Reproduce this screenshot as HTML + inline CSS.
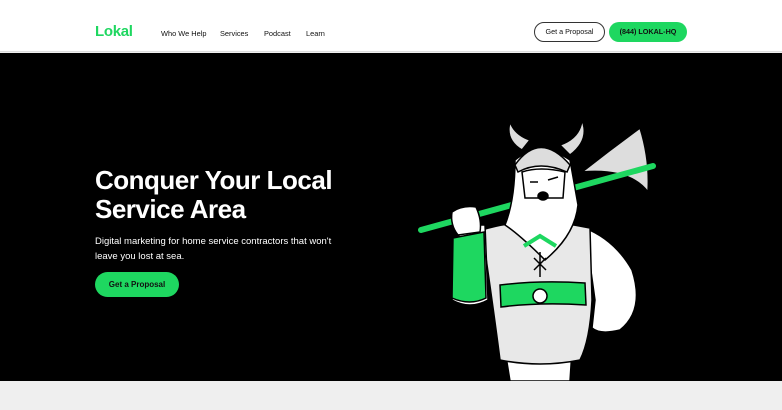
<!DOCTYPE html>
<html><head><style>
*{margin:0;padding:0;box-sizing:border-box}
body{width:782px;height:410px;overflow:hidden;font-family:"Liberation Sans",sans-serif;background:#efefef}
.hdr{position:absolute;top:0;left:0;width:782px;height:52px;background:#fff;border-bottom:1px solid #ddd}
.logo{position:absolute;left:95px;top:23px;font-weight:bold;font-size:15px;color:#1ed760;letter-spacing:-0.3px}
.nav{position:absolute;top:29px;font-size:7.4px;color:#111}
.b1{position:absolute;left:534px;top:22px;width:71px;height:20px;border:1px solid #333;border-radius:10px;font-size:7.2px;text-align:center;line-height:18px;color:#111}
.b2{position:absolute;left:609px;top:22px;width:78px;height:20px;background:#1ed760;border-radius:10px;font-size:7.2px;text-align:center;line-height:20px;color:#111;font-weight:bold}
.hero{position:absolute;top:53px;left:0;width:782px;height:328px;background:#000}
h1{position:absolute;left:95px;top:113px;color:#fff;font-size:26px;line-height:29px;font-weight:bold;letter-spacing:-0.5px}
p{position:absolute;left:95px;top:182px;color:#fff;font-size:9.5px;line-height:14.5px;width:240px}
.cta{position:absolute;left:95px;top:219px;width:84px;height:25px;background:#1ed760;border-radius:13px;font-size:8px;text-align:center;line-height:25px;color:#111;font-weight:bold}
</style></head><body>
<div class="hdr">
<div class="logo">Lokal</div>
<div class="nav" style="left:161px">Who We Help</div>
<div class="nav" style="left:220px">Services</div>
<div class="nav" style="left:264px">Podcast</div>
<div class="nav" style="left:306px">Learn</div>
<div class="b1">Get a Proposal</div>
<div class="b2">(844) LOKAL-HQ</div>
</div>
<div class="hero">
<h1>Conquer Your Local<br>Service Area</h1>
<p>Digital marketing for home service contractors that won't leave you lost at sea.</p>
<div class="cta">Get a Proposal</div>
<svg width="782" height="328" style="position:absolute;left:0;top:0" viewBox="0 53 782 328">
<g stroke="#000" stroke-width="1.5">
<path d="M582 172 Q610 150 640 128 Q650 160 648 192 Q630 168 582 172Z" fill="#ddd"/>
<path d="M585 228 Q615 240 632 270 Q645 310 620 330 Q600 335 592 328 L595 300Z" fill="#fff"/>
<path d="M505 350 L510 381 L570 381 L572 350Z" fill="#fff"/>
<path d="M482 230 Q530 215 590 228 L592 300 Q590 340 580 360 Q540 368 500 360 Q495 320 482 230Z" fill="#e8e8e8"/>
<path d="M500 285 Q540 280 585 283 L586 305 Q540 302 501 307Z" fill="#1ed760"/>
<circle cx="540" cy="296" r="7" fill="#fff"/>
<path d="M460 225 L485 225 L488 300 Q470 310 452 300Z" fill="#fff"/>
<path d="M453 238 L484 232 L486 298 Q470 306 452 298Z" fill="#1ed760"/>
</g>
<line x1="421" y1="230" x2="653" y2="166" stroke="#1ed760" stroke-width="6" stroke-linecap="round"/>
<g stroke="#000" stroke-width="1.5">
<path d="M452 212 Q462 205 476 207 Q482 220 480 232 L458 235 Q450 225 452 212Z" fill="#fff"/>
<path d="M522 150 Q505 140 510 122 Q515 135 530 140Z" fill="#ddd"/>
<path d="M560 145 Q580 138 582 120 Q590 140 570 155Z" fill="#ddd"/>
<path d="M515 160 Q540 140 570 160 L578 205 Q575 235 545 260 Q520 235 505 225 Q515 200 515 160Z" fill="#fff"/>
<path d="M515 165 Q540 130 570 165 L567 172 Q540 160 518 172Z" fill="#ddd"/>
<path d="M522 172 Q540 166 565 172 L563 198 L525 198Z" fill="#fff"/>
<path d="M530 182 l8 0 M548 180 l10 -3" />
<ellipse cx="543" cy="196" rx="5" ry="4" fill="#000"/>
</g>
<path d="M524 246 L540 236 L556 246" stroke="#1ed760" stroke-width="4" fill="none"/>
<path d="M534 258 l12 12 M546 258 l-12 12 M540 252 v25" stroke="#000" stroke-width="1.5"/>
</svg>
</div>
</body></html>
